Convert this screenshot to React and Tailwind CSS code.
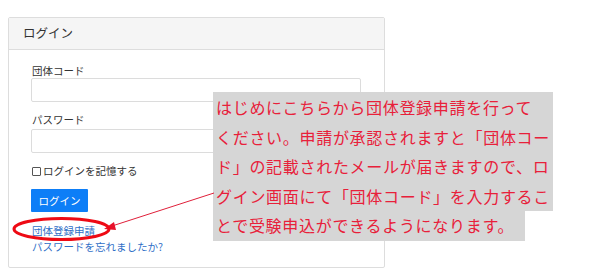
export default function App() {
  const lines = [
    "はじめにこちらから団体登録申請を行って",
    "ください。申請が承認されますと「団体コー",
    "ド」の記載されたメールが届きますので、ロ",
    "グイン画面にて「団体コード」を入力するこ",
  ];
  return (
    <div
      className="relative w-[602px] h-[278px] bg-white overflow-hidden"
      style={{ fontFamily: '"Noto Sans CJK JP", "Noto Sans", sans-serif' }}
    >
      <div className="ml-[8px] mt-[17px] w-[377px] border border-[#dddddd] rounded-[2px]">
        <div className="h-[32px] bg-[#f5f5f5] border-b border-[#dddddd] flex items-center pl-[14px] text-[12.5px] text-[#333]">
          ログイン
        </div>
        <div className="pl-[22px] pr-[23px] pt-[13px] pb-[12px] text-[10.5px] text-[#333]">
          <div className="h-[15px] leading-[15px] pl-[1px]">団体コード</div>
          <div className="h-[24px] border border-[#dcdcdc] rounded-[2px]"></div>
          <div className="mt-[9px] h-[18px] leading-[18px] pl-[1px]">パスワード</div>
          <div className="h-[24px] border border-[#dcdcdc] rounded-[2px]"></div>
          <div className="mt-[10px] h-[16px] flex items-center gap-[2px] pl-[1px]">
            <span className="w-[9px] h-[9px] border border-[#555] rounded-[1px]"></span>
            <span>ログインを記憶する</span>
          </div>
          <div className="mt-[10px] w-[57px] h-[23px] bg-[#0d7ef7] text-white flex items-center justify-center rounded-[1px]">
            ログイン
          </div>
          <div className="mt-[11px] h-[16px] leading-[16px] text-[#2f6fc7] pl-[1px]">団体登録申請</div>
          <div className="h-[16px] leading-[16px] text-[#2f6fc7] pl-[1px]">パスワードを忘れましたか?</div>
        </div>
      </div>

      {/* annotation box */}
      <div
        className="absolute left-[213px] top-[92px] text-[#e8203a] text-[16px] tracking-[0.7px]"
        style={{ fontFamily: '"Noto Sans CJK JP", sans-serif' }}
      >
        <div className="w-[340px] bg-[#d6d6d6] pl-[3px] pt-[1px]">
          {lines.map((l) => (
            <div key={l} className="h-[29.5px] leading-[29.5px] whitespace-nowrap">
              {l}
            </div>
          ))}
        </div>
        <div className="w-[312px] h-[30px] leading-[29.5px] bg-[#d6d6d6] pl-[3px] whitespace-nowrap">
          とで受験申込ができるようになります。
        </div>
      </div>

      {/* arrow and ellipse */}
      <svg className="absolute left-0 top-0" width="602" height="278">
        <line x1="214" y1="193" x2="112" y2="226" stroke="#e0203a" strokeWidth="1" />
        <polygon points="104,229 114,222 116,230" fill="#e8102a" />
        <ellipse cx="61.5" cy="229" rx="47.5" ry="10.5" fill="none" stroke="#ee0a14" strokeWidth="3" />
      </svg>
    </div>
  );
}
